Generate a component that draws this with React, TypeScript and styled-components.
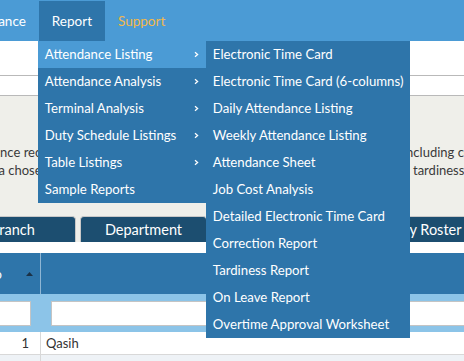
import React from 'react';
import styled, { createGlobalStyle } from 'styled-components';

const GlobalStyle = createGlobalStyle`
  html, body {
    margin: 0;
    padding: 0;
    overflow: hidden;
    background: #ffffff;
  }
  body {
    font-family: Lato, "Open Sans", sans-serif;
    font-size: 13px;
    color: #333333;
  }
`;

const reportMenu = [
  { label: 'Attendance Listing', sub: true, active: true },
  { label: 'Attendance Analysis', sub: true },
  { label: 'Terminal Analysis', sub: true },
  { label: 'Duty Schedule Listings', sub: true },
  { label: 'Table Listings', sub: true },
  { label: 'Sample Reports', sub: false },
];

const listingMenu = [
  'Electronic Time Card',
  'Electronic Time Card (6-columns)',
  'Daily Attendance Listing',
  'Weekly Attendance Listing',
  'Attendance Sheet',
  'Job Cost Analysis',
  'Detailed Electronic Time Card',
  'Correction Report',
  'Tardiness Report',
  'On Leave Report',
  'Overtime Approval Worksheet',
];

const tabs = ['Branch', 'Department', 'Section', 'Daily Duty Roster'];

const App: React.FC = () => {
  return (
    <>
      <GlobalStyle />
      <Viewport>
        <Page>
          <NavBar>
            <NavItem>Attendance</NavItem>
            <NavItem $active>
              Report
              <Dropdown>
                {reportMenu.map((m) => (
                  <MenuItem key={m.label} $active={m.active}>
                    <span>{m.label}</span>
                    {m.sub && <Chevron />}
                    {m.active && (
                      <SubMenu>
                        {listingMenu.map((s) => (
                          <MenuItem key={s}>{s}</MenuItem>
                        ))}
                      </SubMenu>
                    )}
                  </MenuItem>
                ))}
              </Dropdown>
            </NavItem>
            <NavItem $accent>Support</NavItem>
          </NavBar>
          <ToolStrip />
          <FilterStrip />
          <Content>
            <TextLine $indent={10} $split={458}>
              <span>Attendance records of the selected employees are listed,</span>
              <span>including costs</span>
            </TextLine>
            <TextLine $indent={34} $split={468}>
              <span>for a chosen period of dates, with totals of lateness and</span>
              <span>tardiness and overtime</span>
            </TextLine>
            <TabRow>
              {tabs.map((t) => (
                <Tab key={t}>{t}</Tab>
              ))}
            </TabRow>
          </Content>
          <Gap />
          <Table>
            <HeadRow>
              <HeadCell>
                <span>Emp. No</span>
                <SortArrow />
              </HeadCell>
              <HeadCell />
            </HeadRow>
            <FilterRow>
              <FilterCell>
                <FilterInput />
              </FilterCell>
              <FilterCell>
                <FilterInput />
              </FilterCell>
            </FilterRow>
            <DataRow>
              <NumCell>1</NumCell>
              <TextCell>Qasih</TextCell>
            </DataRow>
            <DataRow $alt>
              <NumCell>2</NumCell>
              <TextCell>Rahman</TextCell>
            </DataRow>
          </Table>
        </Page>
      </Viewport>
    </>
  );
};

const Chevron: React.FC = () => (
  <ChevronSvg width="5" height="7" viewBox="0 0 5 7">
    <polyline points="1,1.2 3.6,3.5 1,5.8" fill="none" stroke="#ffffff" strokeWidth="1.3" />
  </ChevronSvg>
);

const SortArrow: React.FC = () => (
  <svg width="7" height="4" viewBox="0 0 7 4">
    <polygon points="0,4 3.5,0 7,4" fill="#1b3247" />
  </svg>
);

const Viewport = styled.div`
  width: 464px;
  height: 361px;
  overflow: hidden;
  position: relative;
`;

const Page = styled.div`
  margin-left: -55px;
  width: 600px;
`;

const NavBar = styled.div`
  display: flex;
  height: 41px;
  background: #4b9bd5;
  position: relative;
  z-index: 5;
`;

const NavItem = styled.div<{ $active?: boolean; $accent?: boolean }>`
  position: relative;
  padding: 0 13px;
  line-height: 40px;
  height: 40px;
  margin-top: 1px;
  font-size: 13.5px;
  color: ${(p) => (p.$accent ? '#f2b84b' : '#ffffff')};
  background: ${(p) => (p.$active ? '#2e75aa' : 'transparent')};
`;

const Dropdown = styled.div`
  position: absolute;
  top: 40px;
  left: -1px;
  width: 168px;
  background: #2e75aa;
`;

const MenuItem = styled.div<{ $active?: boolean }>`
  position: relative;
  display: flex;
  align-items: center;
  justify-content: space-between;
  height: 27px;
  padding: 0 7px 0 7px;
  font-size: 13.2px;
  line-height: 27px;
  color: #ffffff;
  white-space: nowrap;
  background: ${(p) => (p.$active ? '#4b9bd5' : 'transparent')};
`;

const ChevronSvg = styled.svg`
  flex: none;
`;

const SubMenu = styled.div`
  position: absolute;
  top: 0;
  left: 100%;
  width: 204px;
  background: #2e75aa;
`;

const ToolStrip = styled.div`
  height: 34px;
  background: #ffffff;
  border-bottom: 1px solid #b9b9b9;
`;

const FilterStrip = styled.div`
  height: 19px;
  background: #ffffff;
  border-bottom: 1px solid #b9b9b9;
`;

const Content = styled.div`
  background: #efefea;
  padding-top: 47px;
  display: flex;
  flex-direction: column;
`;

const TextLine = styled.div<{ $indent: number; $split: number }>`
  display: grid;
  grid-template-columns: ${(p) => p.$split}px auto;
  height: 18px;
  line-height: 18px;
  font-size: 13px;
  color: #3a3a3a;
  white-space: nowrap;
  overflow: hidden;
  & > span:first-child {
    padding-left: ${(p) => p.$indent}px;
    overflow: hidden;
  }
`;

const TabRow = styled.div`
  display: flex;
  gap: 4px;
  margin-top: 37px;
  padding-left: 4px;
`;

const Tab = styled.div`
  flex: none;
  width: 125px;
  height: 25px;
  line-height: 26px;
  text-align: center;
  white-space: nowrap;
  font-size: 14.5px;
  color: #ffffff;
  background: #1c4e70;
  border: 1px solid #c8c8c8;
  border-bottom: none;
  border-radius: 4px 4px 0 0;
`;

const Gap = styled.div`
  height: 11px;
  background: #ffffff;
`;

const Table = styled.div`
  display: flex;
  flex-direction: column;
`;

const HeadRow = styled.div`
  display: grid;
  grid-template-columns: 96px 1fr;
  height: 41px;
  background: #2e75aa;
`;

const HeadCell = styled.div`
  display: flex;
  align-items: center;
  justify-content: space-between;
  padding: 0 7px 0 8px;
  color: #ffffff;
  font-size: 13px;
  border-right: 1px solid #8fb6d4;
  &:last-child {
    border-right: none;
  }
`;

const FilterRow = styled.div`
  display: grid;
  grid-template-columns: 96px 1fr;
  height: 38px;
  background: #8cc4e8;
`;

const FilterCell = styled.div`
  display: flex;
  align-items: center;
  padding: 0 10px;
`;

const FilterInput = styled.div`
  flex: 1;
  height: 23px;
  background: #ffffff;
  border: 1px solid #c4c4c4;
`;

const DataRow = styled.div<{ $alt?: boolean }>`
  display: grid;
  grid-template-columns: 96px 1fr;
  height: 22px;
  line-height: 22px;
  font-size: 13px;
  color: #333333;
  background: ${(p) => (p.$alt ? '#eef2f6' : '#ffffff')};
  border-bottom: 1px solid #d8d8d8;
`;

const NumCell = styled.div`
  text-align: right;
  padding-right: 11px;
  border-right: 1px solid #d8d8d8;
`;

const TextCell = styled.div`
  padding-left: 5px;
`;

export default App;
